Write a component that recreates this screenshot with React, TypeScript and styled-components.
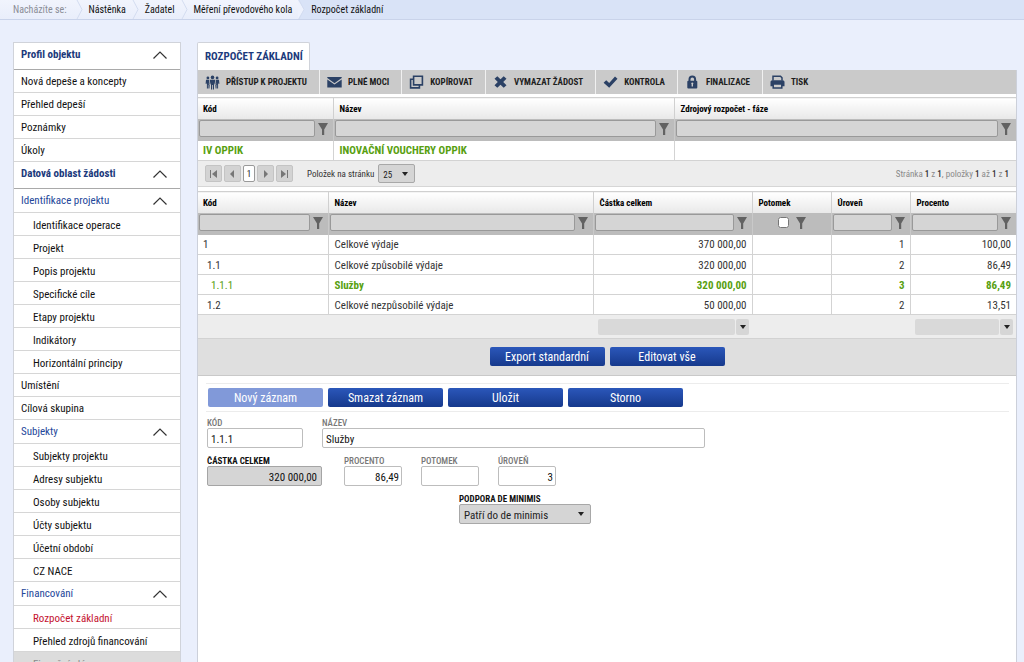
import React from "react";
import styled, { createGlobalStyle, css } from "styled-components";

const font = '"Roboto Condensed", "Liberation Sans Narrow", Roboto, "Liberation Sans", sans-serif';

const GlobalStyle = createGlobalStyle`
  *, *::before, *::after { box-sizing: border-box; }
  body { margin: 0; background: #eaeffc; }
  body, button, input, select { font-family: ${font}; }
  a { color: inherit; text-decoration: none; }
`;

const Page = styled.div`
  height: 100vh;
  overflow: hidden;
  font-size: 11px;
  color: #222;
`;

/* Breadcrumb */

const Crumbs = styled.nav`
  display: flex;
  align-items: stretch;
  height: 20px;
  padding-left: 13px;
  border-bottom: 1px solid #c9d3ea;
  background: linear-gradient(#f1f4fd, #e9eefb);
  font-size: 10px;
  line-height: 19px;
  color: #111;
`;

const CrumbLabel = styled.span`
  color: #8a8d96;
  margin-right: 9px;
`;

const Crumb = styled.a<{ $last?: boolean }>`
  display: flex;
  gap: 6px;
  padding-right: 6px;
  ${(p) => p.$last && css`
    flex: 1;
    background: #d9e3f7;
  `}
`;

const Chevron = styled.svg`
  flex: none;
  width: 7px;
  height: 19px;
`;

/* Layout */

const Columns = styled.div`
  display: flex;
  align-items: stretch;
  gap: 16px;
  height: 100%;
  padding: 22px 7px 0 13px;
`;

const Sidebar = styled.nav`
  flex: none;
  width: 168px;
  border: 1px solid #d0d3da;
  background: #fff;
`;

type Kind = "head" | "group" | "item" | "sub" | "active" | "disabled";

const menuKinds: Record<Kind, ReturnType<typeof css>> = {
  head: css`height: 27px; font-weight: 700; color: #1c3a7c; border-bottom-color: #a9a9a9; padding-bottom: 3px;`,
  group: css`height: 24px; color: #24479a;`,
  item: css`padding-top: 2px;`,
  sub: css`padding-left: 19px; padding-top: 4px;`,
  active: css`padding-left: 19px; padding-top: 4px; color: #c4122f;`,
  disabled: css`padding-left: 19px; padding-top: 4px; color: #8a8a8a; background: #dcdcdc;`,
};

const MenuLink = styled.a<{ $kind: Kind }>`
  display: flex;
  align-items: center;
  justify-content: space-between;
  height: 23px;
  padding: 0 13px 0 7px;
  border-bottom: 1px solid #d6d6d6;
  color: #111;
  line-height: 16px;
  ${(p) => menuKinds[p.$kind]}
`;

const Main = styled.main`
  flex: 1;
  min-width: 0;
  display: flex;
  flex-direction: column;
`;

const Tab = styled.h1`
  align-self: flex-start;
  margin: 0;
  padding: 0 6px 0 7px;
  height: 28px;
  border: 1px solid #d0d3da;
  border-bottom: 0;
  border-radius: 2px 2px 0 0;
  background: #fff;
  font-size: 11px;
  font-weight: 700;
  line-height: 28px;
  color: #1c3a7c;
`;

const Panel = styled.section`
  flex: 1;
  border: 1px solid #ccd0da;
  border-width: 0 1px;
  background: #fff;
`;

const Toolbar = styled.div`
  display: flex;
  height: 24px;
  margin-bottom: 3px;
  background: #cacaca;
`;

const Tool = styled.button`
  display: flex;
  align-items: center;
  gap: 6px;
  padding: 0 12px 0 7px;
  border: 0;
  border-right: 1px solid #f0f0f0;
  background: none;
  font-size: 9px;
  font-weight: 700;
  color: #1d1d1d;
  &:last-child { border-right: 0; }
`;

const ToolIcon = styled.svg`
  flex: none;
  width: 15px;
  height: 15px;
`;

/* Grids */

const Grid = styled.table`
  width: 100%;
  table-layout: fixed;
  border-collapse: collapse;
  color: #333;
`;

const Th = styled.th`
  height: 21px;
  padding: 2px 6px 0;
  border: 1px solid #d0d0d0;
  border-width: 1px 0 0 1px;
  background: linear-gradient(#fff, #e8e8e8);
  font-size: 9px;
  font-weight: 700;
  line-height: 12px;
  text-align: left;
  color: #000;
  white-space: nowrap;
  &:first-child { border-left: 0; padding-left: 5px; }
`;

const FilterTd = styled.td`
  height: 22px;
  padding: 1px 0 0 1px;
  border-left: 1px solid #c9c9c9;
  background: #bcbcbc;
  vertical-align: top;
  &:first-child { border-left: 0; }
`;

const FilterRow = styled.div<{ $center?: boolean }>`
  display: flex;
  align-items: center;
  justify-content: ${(p) => (p.$center ? "center" : "flex-start")};
  gap: ${(p) => (p.$center ? 7 : 3)}px;
  height: 18px;
  padding-right: ${(p) => (p.$center ? 0 : 5)}px;
`;

const FilterInput = styled.input`
  flex: 1;
  min-width: 0;
  height: 17px;
  padding: 0 4px;
  border: 1px solid #999;
  border-radius: 2px;
  background: #d5d5d5;
  font-size: 11px;
`;

const FilterCheck = styled.input`
  width: 11px;
  height: 11px;
  margin: 0;
`;

const IconButton = styled.button`
  display: flex;
  flex: none;
  padding: 0;
  border: 0;
  background: none;
`;

const Td = styled.td<{ $right?: boolean; $level?: number; $green?: boolean; $bold?: boolean }>`
  height: 20px;
  padding: 2px 5px 0 6px;
  border: 1px solid #d3d3d3;
  border-width: 0 0 1px 1px;
  line-height: 16px;
  text-align: ${(p) => (p.$right ? "right" : "left")};
  white-space: nowrap;
  color: ${(p) => (p.$green ? "#58a010" : "#333")};
  font-weight: ${(p) => (p.$bold ? 700 : 400)};
  &:first-child { border-left: 0; padding-left: ${(p) => 5 + 4 * (p.$level ?? 0)}px; }
`;

const FootTd = styled.td`
  height: 24px;
  padding: 0 3px 0 5px;
  background: #ededed;
  border-bottom: 1px solid #d2d2d2;
`;

const FootCombo = styled.div`
  display: flex;
  gap: 1px;
`;

const FootInput = styled.input`
  flex: 1;
  min-width: 0;
  height: 16px;
  padding: 0 4px;
  border: 0;
  border-radius: 2px;
  background: #d9d9d9;
`;

const FootArrow = styled.button`
  display: flex;
  align-items: center;
  justify-content: center;
  width: 13px;
  height: 16px;
  padding: 0;
  border: 0;
  border-radius: 2px;
  background: #d6d6d6;
`;

const Pager = styled.div`
  display: flex;
  align-items: center;
  gap: 2px;
  height: 26px;
  margin-bottom: 4px;
  padding: 0 7px;
  border-bottom: 1px solid #d6d6d6;
  background: #ededed;
  font-size: 9px;
  color: #333;
`;

const PageButton = styled.button<{ $current?: boolean }>`
  display: flex;
  align-items: center;
  justify-content: center;
  width: ${(p) => (p.$current ? 12 : 17)}px;
  height: 17px;
  padding: 0;
  border: 1px solid ${(p) => (p.$current ? "#999" : "#c4c4c4")};
  border-radius: 2px;
  background: ${(p) => (p.$current ? "#fff" : "#d3d3d3")};
  font-size: 9px;
  color: #222;
`;

const PageSizeLabel = styled.label`
  margin: 0 2px 0 12px;
`;

const PageInfo = styled.p`
  margin: 0 0 0 auto;
  color: #8a8a8a;
  b { font-weight: 500; color: #333; }
`;

const SelectBox = styled.div<{ $wide?: boolean }>`
  position: relative;
  width: ${(p) => (p.$wide ? 132 : 37)}px;
  svg {
    position: absolute;
    right: 7px;
    top: 8px;
    pointer-events: none;
  }
  select {
    display: block;
    width: 100%;
    height: ${(p) => (p.$wide ? 20 : 19)}px;
    padding: 2px 4px 0;
    appearance: none;
    border: 1px solid #a8a8a8;
    border-radius: 2px;
    background: #d5d5d5;
    font-size: ${(p) => (p.$wide ? 11 : 9)}px;
    color: #222;
  }
`;

/* Actions and form */

const ExportBar = styled.div`
  display: flex;
  justify-content: center;
  align-items: center;
  gap: 5px;
  height: 37px;
  padding-bottom: 2px;
  border-bottom: 1px solid #c9c9c9;
  background: #dfdfdf;
`;

const Action = styled.button`
  width: 115px;
  height: 19px;
  padding: 1px 0 0;
  border: 0;
  border-radius: 2px;
  background: linear-gradient(#2b57ba, #16398c);
  font-size: 12px;
  line-height: 18px;
  color: #fff;
  &:disabled { background: #8199d9; }
`;

const Form = styled.form`
  padding: 7px 7px 0 8px;
`;

const ActionRow = styled.div`
  display: flex;
  gap: 5px;
  margin-bottom: 6px;
  padding: 4px 2px;
  border: 1px solid #ececec;
  border-width: 1px 0;
`;

const FieldRow = styled.div<{ $indent?: boolean }>`
  display: flex;
  gap: 19px;
  margin-bottom: 8px;
  padding-left: ${(p) => (p.$indent ? 253 : 1)}px;
`;

const Field = styled.div<{ $w: number; $dark?: boolean; $gap?: number }>`
  width: ${(p) => p.$w}px;
  margin-right: ${(p) => p.$gap ?? 0}px;
  label {
    display: block;
    font-size: 9px;
    font-weight: ${(p) => (p.$dark ? 700 : 500)};
    line-height: 10px;
    white-space: nowrap;
    color: ${(p) => (p.$dark ? "#111" : "#777")};
  }
`;

const TextInput = styled.input<{ $right?: boolean; $gray?: boolean }>`
  display: block;
  width: 100%;
  height: 20px;
  padding: 2px ${(p) => (p.$gray ? 4 : 2)}px 0 3px;
  border: 1px solid ${(p) => (p.$gray ? "#a5a5a5" : "#bdbdbd")};
  border-radius: 2px;
  background: ${(p) => (p.$gray ? "#d5d5d5" : "#fff")};
  font-size: 11px;
  color: #111;
  text-align: ${(p) => (p.$right ? "right" : "left")};
`;

const navy = "#2b4165";

const icons: Record<string, React.ReactNode> = {
  people: (
    <g fill={navy}>
      <circle cx="7.5" cy="2.4" r="1.8" />
      <path d="M5 4.8h5l.6 4.4-1 .3-.6-2.5V14.5H7.9V10h-.8v4.5H6V7l-.6 2.5-1-.3z" />
      <circle cx="2.9" cy="2.9" r="1.4" />
      <path d="M1 4.8h3.3L3.8 9l.9.9-.3 3.6h-1V9.8H2.9v3.7h-1V7.4L1.4 9 .6 8.7z" />
      <circle cx="12.1" cy="2.9" r="1.4" />
      <path d="M14 4.8h-3.3l.5 4.2-.9.9.3 3.6h1V9.8h.5v3.7h1V7.4l.5 1.6.8-.3z" />
    </g>
  ),
  mail: (
    <g fill={navy}>
      <path d="M.3 2h14.4v1L7.5 8.2.3 3z" />
      <path d="M.3 4.400l7.200 5.200 7.200-5.200v8H.3z" />
    </g>
  ),
  copy: (
    <g fill="none" stroke={navy} strokeWidth="1.6">
      <path d="M4.600 1.300h8.800v8.600H4.600z" />
      <path d="M4.600 4.300H1.600v8.600h8.800V9.900" />
    </g>
  ),
  cross: <path fill={navy} d="M1.500 3.800l2.800-2.600 3.200 3 3.200-3 2.800 2.600-3.300 3.200 3.300 3.200-2.800 2.600-3.200-3-3.200 3-2.800-2.600 3.300-3.200z" />,
  check: <path fill={navy} d="M.6 7.700l2.600-2.500 3 2.700 5.800-6.300 2.500 2.200-8.300 9z" />,
  lock: (
    <>
      <path fill="none" stroke={navy} strokeWidth="2" d="M4.500 6.500V4.200a2.800 2.800 0 0 1 5.600 0V6.500" />
      <rect x="2.300" y="5.700" width="10" height="7.800" rx="1" fill={navy} />
      <path fill="#cacaca" d="M7.300 7.400a1.100 1.100 0 0 1 .7 1.900v2.300H6.600V9.300a1.100 1.100 0 0 1 .7-1.900z" />
    </>
  ),
  print: (
    <>
      <path fill="none" stroke={navy} strokeWidth="1.500" d="M3 5.500V1.300h7.500L12 2.800V5.500" />
      <path fill={navy} d="M1.800 5.300h11.400l1.300 1.300v4.600h-2.700V9H3.200v2.200H.5V6.600z" />
      <path fill="none" stroke={navy} strokeWidth="1.500" d="M3.200 9h8.600v4H3.200z" />
    </>
  ),
};

const tools = [
  ["people", "PŘÍSTUP K PROJEKTU"],
  ["mail", "PLNÉ MOCI"],
  ["copy", "KOPÍROVAT"],
  ["cross", "VYMAZAT ŽÁDOST"],
  ["check", "KONTROLA"],
  ["lock", "FINALIZACE"],
  ["print", "TISK"],
];

const menu: [Kind, string][] = [
  ["head", "Profil objektu"],
  ["item", "Nová depeše a koncepty"],
  ["item", "Přehled depeší"],
  ["item", "Poznámky"],
  ["item", "Úkoly"],
  ["head", "Datová oblast žádosti"],
  ["group", "Identifikace projektu"],
  ["sub", "Identifikace operace"],
  ["sub", "Projekt"],
  ["sub", "Popis projektu"],
  ["sub", "Specifické cíle"],
  ["sub", "Etapy projektu"],
  ["sub", "Indikátory"],
  ["sub", "Horizontální principy"],
  ["item", "Umístění"],
  ["item", "Cílová skupina"],
  ["group", "Subjekty"],
  ["sub", "Subjekty projektu"],
  ["sub", "Adresy subjektu"],
  ["sub", "Osoby subjektu"],
  ["sub", "Účty subjektu"],
  ["sub", "Účetní období"],
  ["sub", "CZ NACE"],
  ["group", "Financování"],
  ["active", "Rozpočet základní"],
  ["sub", "Přehled zdrojů financování"],
  ["disabled", "Finanční plán"],
];

const crumbs = ["Nástěnka", "Žadatel", "Měření převodového kola", "Rozpočet základní"];

const budget = [
  { code: "1", level: 0, name: "Celkové výdaje", sum: "370 000,00", depth: "1", pct: "100,00" },
  { code: "1.1", level: 1, name: "Celkové způsobilé výdaje", sum: "320 000,00", depth: "2", pct: "86,49" },
  { code: "1.1.1", level: 2, name: "Služby", sum: "320 000,00", depth: "3", pct: "86,49", selected: true },
  { code: "1.2", level: 1, name: "Celkové nezpůsobilé výdaje", sum: "50 000,00", depth: "2", pct: "13,51" },
];

const ArrowDown = () => (
  <svg width="6" height="4" viewBox="0 0 6 4"><path d="M0 0h6L3 4z" fill="#222" /></svg>
);

const Funnel = ({ label }: { label: string }) => (
  <IconButton type="button" aria-label={`Filtr: ${label}`}>
    <svg width="10" height="12" viewBox="0 0 10 12"><path d="M0 0h10L6.200 6.500V12H4V6.500z" fill="#626262" /></svg>
  </IconButton>
);

const Filter = ({ label }: { label: string }) => (
  <FilterTd>
    <FilterRow>
      <FilterInput aria-label={label} />
      <Funnel label={label} />
    </FilterRow>
  </FilterTd>
);

const FootCell = ({ label }: { label: string }) => (
  <FootTd>
    <FootCombo>
      <FootInput aria-label={`Souhrn: ${label}`} />
      <FootArrow type="button" aria-label={`Vybrat souhrn: ${label}`}><ArrowDown /></FootArrow>
    </FootCombo>
  </FootTd>
);

const PageNav = ({ label, d }: { label: string; d: string }) => (
  <PageButton type="button" aria-label={label}>
    <svg width="9" height="8" viewBox="0 0 9 8"><path d={d} fill="#777" /></svg>
  </PageButton>
);

export default function App() {
  return (
    <>
      <GlobalStyle />
      <Page>
        <Crumbs aria-label="Drobečková navigace">
          <CrumbLabel>Nacházíte se:</CrumbLabel>
          {crumbs.map((c, i) => {
            const last = i === crumbs.length - 1;
            return (
              <Crumb key={c} href="#" $last={last}>
                <Chevron viewBox="0 0 7 19">
                  {last && <path d="M0 0l6 9.500L0 19z" fill="#eef2fd" />}
                  <path d="M1 0l5 9.500L1 19" fill="none" stroke="#d3dcf0" />
                </Chevron>
                {c}
              </Crumb>
            );
          })}
        </Crumbs>
        <Columns>
          <Sidebar>
            {menu.map(([kind, text]) => (
              <MenuLink key={text} href="#" $kind={kind}>
                {text}
                {(kind === "head" || kind === "group") && (
                  <svg width="14" height="8" viewBox="0 0 14 8">
                    <path d="M.5 7.500L7 1l6.500 6.500" fill="none" stroke="#333" strokeWidth="1.200" />
                  </svg>
                )}
              </MenuLink>
            ))}
          </Sidebar>
          <Main>
            <Tab>ROZPOČET ZÁKLADNÍ</Tab>
            <Panel>
              <Toolbar>
                {tools.map(([icon, text]) => (
                  <Tool key={text} type="button">
                    <ToolIcon viewBox="0 0 15 15">{icons[icon]}</ToolIcon>
                    {text}
                  </Tool>
                ))}
              </Toolbar>
              <Grid>
                <colgroup>
                  <col style={{ width: 135 }} />
                  <col />
                  <col style={{ width: 342 }} />
                </colgroup>
                <thead>
                  <tr><Th>Kód</Th><Th>Název</Th><Th>Zdrojový rozpočet - fáze</Th></tr>
                  <tr><Filter label="Kód" /><Filter label="Název" /><Filter label="Zdrojový rozpočet - fáze" /></tr>
                </thead>
                <tbody>
                  <tr><Td $green $bold>IV OPPIK</Td><Td $green $bold>INOVAČNÍ VOUCHERY OPPIK</Td><Td /></tr>
                </tbody>
              </Grid>
              <Pager>
                <PageNav label="První" d="M1 0h1v8H1zM8 0v8L3 4z" />
                <PageNav label="Předchozí" d="M6 0v8L2 4z" />
                <PageButton type="button" $current>1</PageButton>
                <PageNav label="Další" d="M3 0v8l4-4z" />
                <PageNav label="Poslední" d="M7 0h1v8H7zM1 0v8l5-4z" />
                <PageSizeLabel htmlFor="pagesize">Položek na stránku</PageSizeLabel>
                <SelectBox>
                  <select id="pagesize"><option>25</option></select>
                  <ArrowDown />
                </SelectBox>
                <PageInfo>Stránka <b>1</b> z <b>1</b>, položky <b>1</b> až <b>1</b> z <b>1</b></PageInfo>
              </Pager>
              <Grid>
                <colgroup>
                  <col style={{ width: 130 }} />
                  <col />
                  <col style={{ width: 159 }} />
                  <col style={{ width: 79 }} />
                  <col style={{ width: 79 }} />
                  <col style={{ width: 106 }} />
                </colgroup>
                <thead>
                  <tr>
                    <Th>Kód</Th><Th>Název</Th><Th>Částka celkem</Th><Th>Potomek</Th><Th>Úroveň</Th><Th>Procento</Th>
                  </tr>
                  <tr>
                    <Filter label="Kód" />
                    <Filter label="Název" />
                    <Filter label="Částka celkem" />
                    <FilterTd>
                      <FilterRow $center>
                        <FilterCheck type="checkbox" aria-label="Potomek" />
                        <Funnel label="Potomek" />
                      </FilterRow>
                    </FilterTd>
                    <Filter label="Úroveň" />
                    <Filter label="Procento" />
                  </tr>
                </thead>
                <tbody>
                  {budget.map((r) => (
                    <tr key={r.code}>
                      <Td $level={r.level} $green={r.selected}>{r.code}</Td>
                      <Td $green={r.selected} $bold={r.selected}>{r.name}</Td>
                      <Td $right $green={r.selected} $bold={r.selected}>{r.sum}</Td>
                      <Td />
                      <Td $right $green={r.selected} $bold={r.selected}>{r.depth}</Td>
                      <Td $right $green={r.selected} $bold={r.selected}>{r.pct}</Td>
                    </tr>
                  ))}
                </tbody>
                <tfoot>
                  <tr>
                    <FootTd /><FootTd />
                    <FootCell label="Částka celkem" />
                    <FootTd /><FootTd />
                    <FootCell label="Procento" />
                  </tr>
                </tfoot>
              </Grid>
              <ExportBar>
                <Action type="button">Export standardní</Action>
                <Action type="button">Editovat vše</Action>
              </ExportBar>
              <Form>
                <ActionRow>
                  <Action type="button" disabled>Nový záznam</Action>
                  <Action type="button">Smazat záznam</Action>
                  <Action type="button">Uložit</Action>
                  <Action type="button">Storno</Action>
                </ActionRow>
                <FieldRow>
                  <Field $w={96}>
                    <label htmlFor="kod">KÓD</label>
                    <TextInput id="kod" defaultValue="1.1.1" />
                  </Field>
                  <Field $w={383}>
                    <label htmlFor="nazev">NÁZEV</label>
                    <TextInput id="nazev" defaultValue="Služby" />
                  </Field>
                </FieldRow>
                <FieldRow>
                  <Field $w={115} $dark $gap={3}>
                    <label htmlFor="castka">ČÁSTKA CELKEM</label>
                    <TextInput id="castka" $right $gray defaultValue="320 000,00" />
                  </Field>
                  <Field $w={58}>
                    <label htmlFor="procento">PROCENTO</label>
                    <TextInput id="procento" $right defaultValue="86,49" />
                  </Field>
                  <Field $w={58}>
                    <label htmlFor="potomek">POTOMEK</label>
                    <TextInput id="potomek" />
                  </Field>
                  <Field $w={58}>
                    <label htmlFor="uroven">ÚROVEŇ</label>
                    <TextInput id="uroven" $right defaultValue="3" />
                  </Field>
                </FieldRow>
                <FieldRow $indent>
                  <Field $w={132} $dark>
                    <label htmlFor="minimis">PODPORA DE MINIMIS</label>
                    <SelectBox $wide>
                      <select id="minimis"><option>Patří do de minimis</option></select>
                      <ArrowDown />
                    </SelectBox>
                  </Field>
                </FieldRow>
              </Form>
            </Panel>
          </Main>
        </Columns>
      </Page>
    </>
  );
}
